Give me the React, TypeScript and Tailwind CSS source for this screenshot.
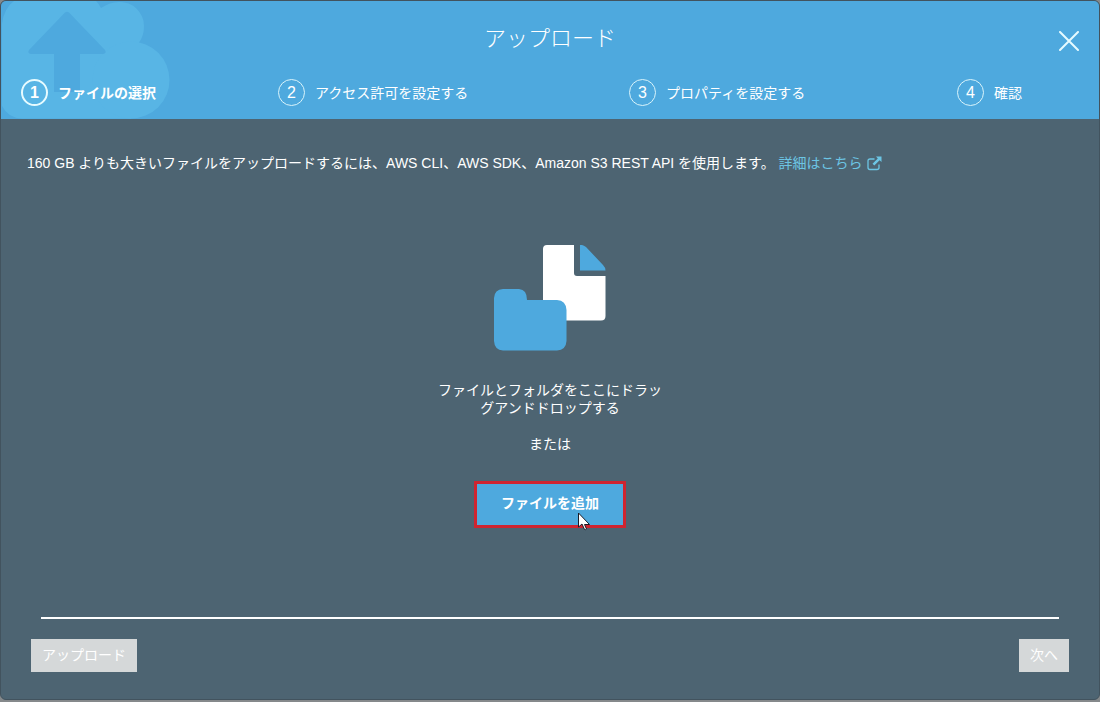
import type { ReactNode } from "react";
import clsx from "clsx";

const steps = [
  { n: 1, label: "ファイルの選択" },
  { n: 2, label: "アクセス許可を設定する" },
  { n: 3, label: "プロパティを設定する" },
  { n: 4, label: "確認" },
];

const CURRENT_STEP = 1;

function CloudUpload() {
  return (
    <svg
      viewBox="1 1 170 118"
      width={170}
      height={118}
      aria-hidden="true"
      className="pointer-events-none absolute left-0 top-0"
    >
      <path
        d="M2 24Q4 8 14 1H96Q99 4 101 8Q110 2 119 2A24 24 0 0 1 144 26Q144 36 139 42.500L131 118.500H22Q8 118 2 106Z"
        fill="#58b5e5"
      />
      <circle cx={131} cy={80} r={38.5} fill="#58b5e5" />
      <path
        d="M65 12.6Q67 11 69 12.6L105 50Q107 53.500 103 54H80V92H54V54H31Q27 53.500 29 50Z"
        fill="#4ea9de"
      />
    </svg>
  );
}

function FilesIllustration() {
  return (
    <svg viewBox="0 0 112 106" width={112} height={106} aria-hidden="true">
      <path
        d="M52 0H80V28Q80 31 83 31H111.500V71Q111.500 75.500 107 75.500H53Q49 75.500 49 71V4Q49 0 53 0Z"
        fill="#fff"
      />
      <path d="M86 0H88Q90 0.500 92 2L109 20Q111.500 22.500 111.500 25.500H86Z" fill="#4ea9de" />
      <path
        d="M9 44H25Q33 44.500 33 55H63Q72 55.500 72.500 65V96Q72 105 63 105.500H9Q0.500 105 0 96V53Q0.500 44.500 9 44Z"
        fill="#4ea9de"
      />
    </svg>
  );
}

function ExternalLinkIcon() {
  return (
    <svg viewBox="0 0 15 15" width={15} height={15} aria-hidden="true">
      <path
        d="M7.500 3H3Q1 3 1 5V11.500Q1 13.500 3 13.500H10Q12 13.500 12 11.500V8.500"
        fill="none"
        stroke="currentColor"
        strokeWidth={1.3}
      />
      <path d="M9 0.500H14.500V6L12.600 4.200L7.300 9.500L5.500 7.700L10.800 2.400Z" fill="currentColor" />
    </svg>
  );
}

function Cursor() {
  return (
    <svg
      viewBox="0 0 14 20"
      width={14}
      height={20}
      aria-hidden="true"
      className="pointer-events-none absolute left-[103px] top-[31px]"
    >
      <path
        d="M1.500 1V15L5 12L7.500 17.500Q8.500 18 9.500 17L7.500 12.500H12.500Z"
        fill="#fff"
        stroke="#1b1b26"
        strokeWidth={1}
      />
    </svg>
  );
}

function FooterButton({ children }: { children: ReactNode }) {
  return (
    <button type="button" disabled className="h-[33px] bg-[#d5d8d9] px-[11px] pb-[2px] text-white">
      {children}
    </button>
  );
}

export default function App() {
  return (
    <div className="flex min-h-screen flex-col bg-[#85898b] pb-[2px] font-['Liberation_Sans','Noto_Sans_CJK_JP',sans-serif] text-sm leading-[18px] text-white">
      <div
        role="dialog"
        aria-labelledby="upload-title"
        className="flex grow flex-col overflow-hidden rounded-md border border-[#42535e] bg-[#4d6472]"
      >
        <header className="relative h-[118px] bg-[#4ea9de]">
          <CloudUpload />
          <div className="relative flex flex-col pt-6">
            <h1 id="upload-title" className="text-center text-[22px] font-light leading-7">
              アップロード
            </h1>
            <button type="button" aria-label="閉じる" className="absolute right-5 top-[30px]">
              <svg viewBox="0 0 20 20" width={20} height={20} aria-hidden="true">
                <path d="M1 1L19 19M19 1L1 19" stroke="#e6fbff" strokeWidth={2} strokeLinecap="round" />
              </svg>
            </button>
            <ol className="mt-[26px] grid grid-cols-[257fr_351fr_328fr_122fr] px-5">
              {steps.map((step) => (
                <li
                  key={step.n}
                  aria-current={step.n === CURRENT_STEP ? "step" : undefined}
                  className={clsx(
                    "flex items-center gap-[10px] whitespace-nowrap",
                    step.n === CURRENT_STEP && "font-bold",
                  )}
                >
                  <span
                    className={clsx(
                      "flex size-[27px] shrink-0 items-center justify-center rounded-full text-base",
                      step.n === CURRENT_STEP ? "border-2 border-[#e6fbff]" : "border border-[#d9f4fb]",
                    )}
                  >
                    {step.n}
                  </span>
                  {step.label}
                </li>
              ))}
            </ol>
          </div>
        </header>

        <main className="flex grow flex-col items-center pt-[35px]">
          <p className="w-full px-[26px]">
            160 GB よりも大きいファイルをアップロードするには、AWS CLI、AWS SDK、Amazon S3 REST API を使用します。{" "}
            <a href="#details" className="inline-flex items-center gap-1 text-[#6cc5e4]">
              詳細はこちら
              <ExternalLinkIcon />
            </a>
          </p>

          <div className="mt-[73px] flex flex-col items-center">
            <FilesIllustration />
            <p className="mt-[30px] text-center">
              ファイルとフォルダをここにドラッ
              <br />
              グアンドドロップする
            </p>
            <p className="mt-[18px]">または</p>
            <div className="relative mt-7">
              <button
                type="button"
                className="h-[47px] border-[3px] border-[#cf2430] bg-[#4ea9de] px-6 pb-[3px] font-bold"
              >
                ファイルを追加
              </button>
              <Cursor />
            </div>
          </div>
        </main>

        <footer className="px-[30px] pb-[27px]">
          <hr className="mx-[10px] border-t-2 border-white" />
          <div className="mt-5 flex justify-between">
            <FooterButton>アップロード</FooterButton>
            <FooterButton>次へ</FooterButton>
          </div>
        </footer>
      </div>
    </div>
  );
}
